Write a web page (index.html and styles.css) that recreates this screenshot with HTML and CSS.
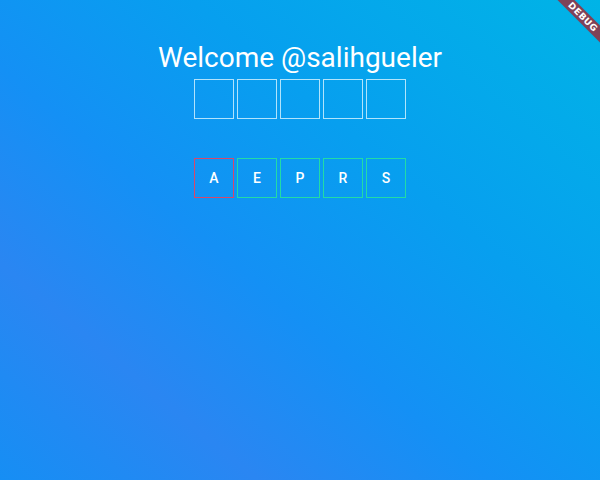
FILE: index.html
```html
<!DOCTYPE html>
<html>
<head>
<meta charset="utf-8">
<link rel="stylesheet" href="styles.css">
</head>
<body>
<div class="screen">
  <div class="content">
    <h1 class="title">Welcome @salihgueler</h1>
    <div class="row slots">
      <div class="box"></div>
      <div class="box"></div>
      <div class="box"></div>
      <div class="box"></div>
      <div class="box"></div>
    </div>
    <div class="row letters">
      <div class="box letter wrong">A</div>
      <div class="box letter ok">E</div>
      <div class="box letter ok">P</div>
      <div class="box letter ok">R</div>
      <div class="box letter ok">S</div>
    </div>
  </div>
  <div class="banner">DEBUG</div>
</div>
</body>
</html>
```
FILE: styles.css
```css
html, body {
  margin: 0;
  padding: 0;
}
body {
  width: 600px;
  height: 480px;
  overflow: hidden;
  font-family: Roboto, "Liberation Sans", sans-serif;
}
.screen {
  position: relative;
  width: 600px;
  height: 480px;
  overflow: hidden;
  background: linear-gradient(40deg, #168ef4 0%, #2a86f2 22%, #1490f5 42%, #079fef 65%, #00b4e6 100%);
}
.content {
  display: flex;
  flex-direction: column;
  align-items: center;
  padding-top: 41px;
}
.title {
  margin: 0;
  font-size: 28px;
  line-height: 33px;
  font-weight: 400;
  color: #ffffff;
}
.row {
  display: flex;
  gap: 3px;
}
.slots {
  margin-top: 5px;
}
.letters {
  margin-top: 39px;
}
.box {
  box-sizing: border-box;
  width: 40px;
  height: 40px;
  border: 1px solid rgba(220, 245, 255, 0.8);
}
.letter {
  display: flex;
  align-items: center;
  justify-content: center;
  color: #ffffff;
  font-size: 14px;
  font-weight: 500;
}
.letter.ok {
  border: 1px solid #22dba6;
}
.letter.wrong {
  border: 1px solid #d9476a;
}
.banner {
  position: absolute;
  left: 533px;
  top: 11px;
  width: 100px;
  height: 12px;
  transform: rotate(45deg);
  background: rgba(170, 28, 40, 0.75);
  color: #ffffff;
  font-family: "DejaVu Sans", sans-serif;
  font-size: 9px;
  font-weight: 700;
  line-height: 12px;
  text-align: center;
  letter-spacing: 0.5px;
}
```
